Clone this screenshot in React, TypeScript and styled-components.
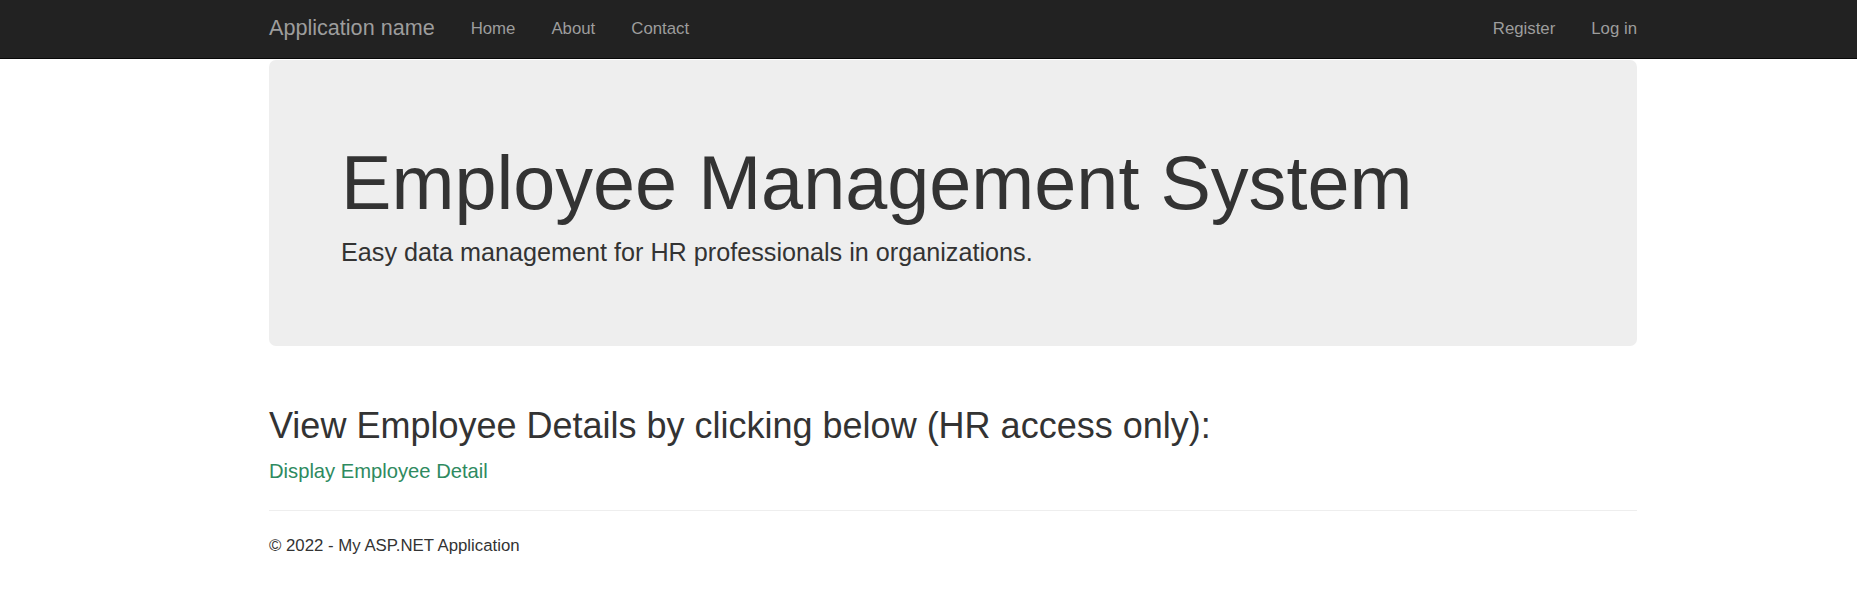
import styled, { createGlobalStyle } from "styled-components";

const GlobalStyle = createGlobalStyle`
	html, body {
		margin: 0;
		padding: 0;
		background: #fff;
	}
	body {
		font-family: "Liberation Sans", Arial, Helvetica, sans-serif;
		color: #333;
	}
`;

const Navbar = styled.nav`
	height: 58px;
	background-color: #222;
	border-bottom: 1px solid #080808;
`;

const Container = styled.div`
	width: 1368px;
	margin-left: 269px;
	box-sizing: border-box;
`;

const NavInner = styled(Container)`
	display: flex;
	align-items: center;
	height: 100%;
`;

const Brand = styled.a`
	font-size: 21.6px;
	line-height: 58px;
	color: #9d9d9d;
	text-decoration: none;
	margin-right: 18px;
	padding-bottom: 2px;
`;

const NavList = styled.ul<{ $right?: boolean }>`
	display: flex;
	list-style: none;
	margin: 0;
	padding: 0;
	margin-left: ${({ $right }) => ($right ? "auto" : "0")};
`;

const NavLink = styled.a`
	display: block;
	font-size: 16.8px;
	line-height: 58px;
	padding: 0 18px;
	color: #9d9d9d;
	text-decoration: none;
	li:last-child > & {
		padding-right: 0;
	}
`;

const Body = styled(Container)`
	padding-top: 1px;
`;

const Jumbotron = styled.section`
	background-color: #eee;
	border-radius: 7px;
	padding: 82px 72px 76px;
`;

const Title = styled.h1`
	margin: 0;
	font-size: 75.6px;
	line-height: 1.1;
	font-weight: 400;
	color: #333;
`;

const Lead = styled.p`
	margin: 10px 0 0;
	font-size: 25.2px;
	line-height: 1.4;
	font-weight: 400;
`;

const Heading = styled.h2`
	margin: 60px 0 0;
	font-size: 36px;
	line-height: 1.1;
	font-weight: 400;
`;

const DetailLink = styled.a`
	display: block;
	margin-top: 11px;
	font-size: 20.2px;
	line-height: 1.4;
	color: #2e8a60;
	text-decoration: none;
`;

const Rule = styled.hr`
	margin: 25px 0 0;
	border: 0;
	border-top: 1px solid #eee;
`;

const Footer = styled.footer`
	margin-top: 23px;
	font-size: 16.8px;
	line-height: 1.4;
`;

export default function App() {
	return (
		<>
			<GlobalStyle />
			<Navbar>
				<NavInner>
					<Brand href="#">Application name</Brand>
					<NavList>
						<li><NavLink href="#">Home</NavLink></li>
						<li><NavLink href="#">About</NavLink></li>
						<li><NavLink href="#">Contact</NavLink></li>
					</NavList>
					<NavList $right>
						<li><NavLink href="#">Register</NavLink></li>
						<li><NavLink href="#">Log in</NavLink></li>
					</NavList>
				</NavInner>
			</Navbar>
			<Body>
				<Jumbotron>
					<Title>Employee Management System</Title>
					<Lead>Easy data management for HR professionals in organizations.</Lead>
				</Jumbotron>
				<Heading>View Employee Details by clicking below (HR access only):</Heading>
				<DetailLink href="#">Display Employee Detail</DetailLink>
				<Rule />
				<Footer>&copy; 2022 - My ASP.NET Application</Footer>
			</Body>
		</>
	);
}
